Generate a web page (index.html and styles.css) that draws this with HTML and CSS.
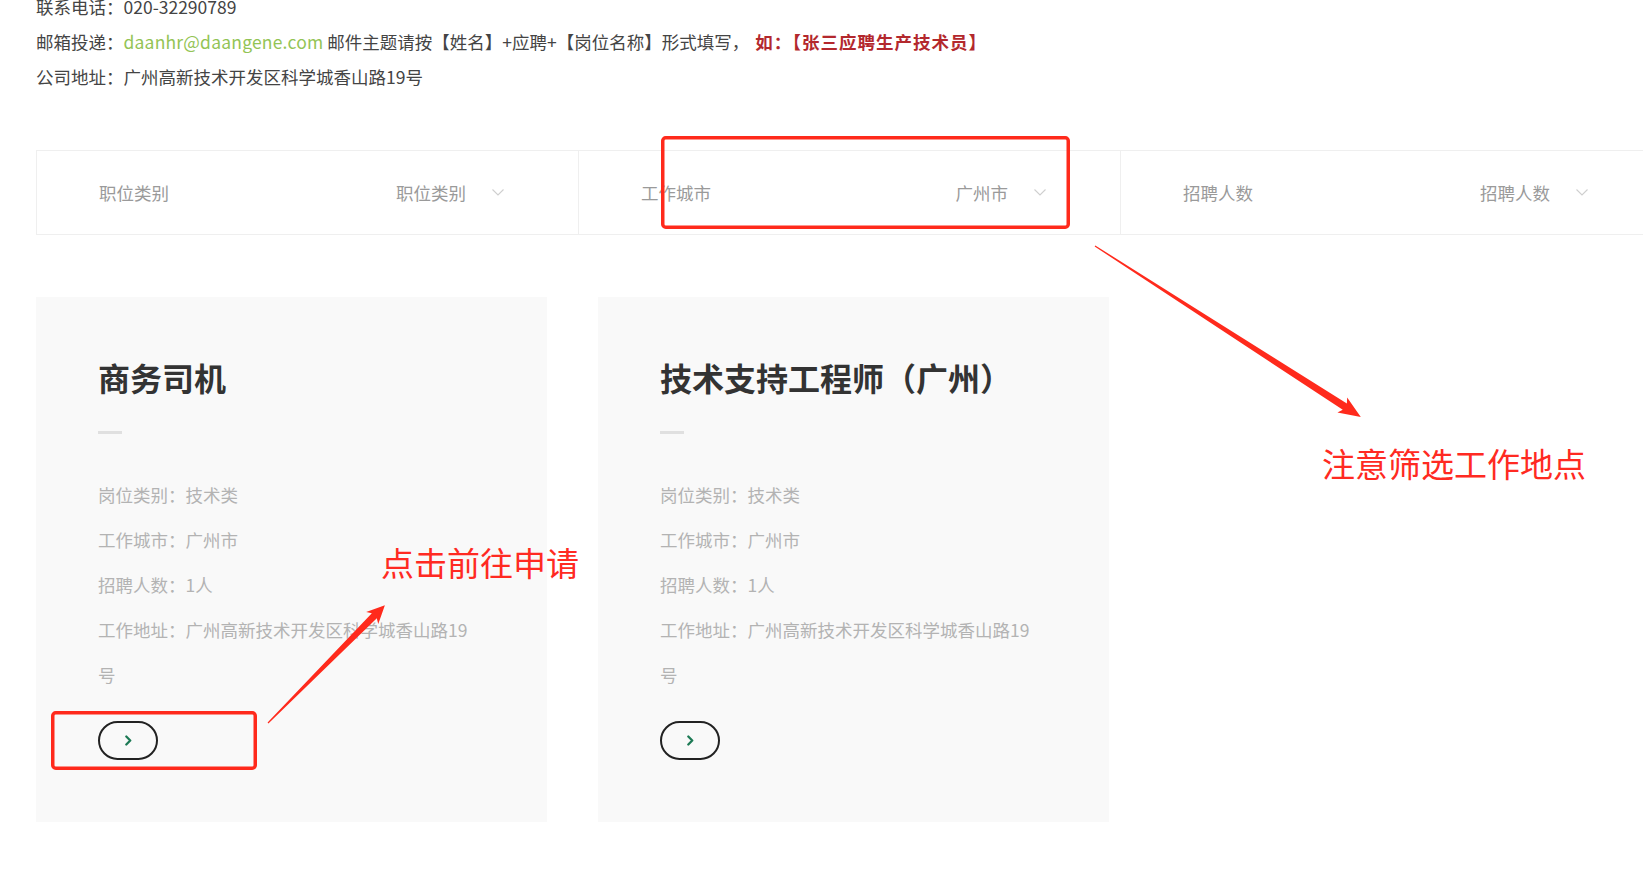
FILE: index.html
```html
<!DOCTYPE html>
<html lang="zh-CN">
<head>
<meta charset="utf-8">
<title>招聘职位</title>
<link rel="stylesheet" href="styles.css">
</head>
<body>
<div class="page">
  <div class="contact">
    <p>联系电话：020-32290789</p>
    <p>邮箱投递：<span class="email">daanhr@daangene.com</span> 邮件主题请按【姓名】+应聘+【岗位名称】形式填写，<strong class="hint">如：【张三应聘生产技术员】</strong></p>
    <p>公司地址：广州高新技术开发区科学城香山路19号</p>
  </div>

  <div class="filters">
    <div class="filter">
      <span class="label">职位类别</span>
      <span class="select">职位类别<svg class="chev" viewBox="0 0 12 7" width="12" height="7"><polyline points="0.5,0.5 6,6 11.5,0.5"/></svg></span>
    </div>
    <div class="filter">
      <span class="label">工作城市</span>
      <span class="select">广州市<svg class="chev" viewBox="0 0 12 7" width="12" height="7"><polyline points="0.5,0.5 6,6 11.5,0.5"/></svg></span>
    </div>
    <div class="filter">
      <span class="label">招聘人数</span>
      <span class="select">招聘人数<svg class="chev" viewBox="0 0 12 7" width="12" height="7"><polyline points="0.5,0.5 6,6 11.5,0.5"/></svg></span>
    </div>
  </div>

  <div class="jobs">
    <div class="job">
      <h3 class="job-title">商务司机</h3>
      <div class="job-bar"></div>
      <ul class="job-info">
        <li>岗位类别：技术类</li>
        <li>工作城市：广州市</li>
        <li>招聘人数：1人</li>
        <li>工作地址：广州高新技术开发区科学城香山路19号</li>
      </ul>
      <a class="job-go" href="#"><svg viewBox="0 0 8 12" width="7" height="11"><polyline points="1.5,1.5 6,6 1.5,10.5"/></svg></a>
    </div>
    <div class="job">
      <h3 class="job-title">技术支持工程师（广州）</h3>
      <div class="job-bar"></div>
      <ul class="job-info">
        <li>岗位类别：技术类</li>
        <li>工作城市：广州市</li>
        <li>招聘人数：1人</li>
        <li>工作地址：广州高新技术开发区科学城香山路19号</li>
      </ul>
      <a class="job-go" href="#"><svg viewBox="0 0 8 12" width="7" height="11"><polyline points="1.5,1.5 6,6 1.5,10.5"/></svg></a>
    </div>
  </div>
</div>

<div class="annotations">
  <svg class="marks" width="1643" height="878" viewBox="0 0 1643 878">
    <rect class="mark-rect" x="662.75" y="137.75" width="405.5" height="89.5" rx="3"/>
    <rect class="mark-rect" x="52.75" y="712.75" width="202.5" height="55.5" rx="3"/>
    <g transform="translate(1095,246) rotate(32.74)">
      <polygon class="mark-arrow" points="0,-0.6 297,-3.8 294,-9 316,0 294,9 297,3.8 0,0.6"/>
    </g>
    <g transform="translate(268,723) rotate(-45.24)">
      <polygon class="mark-arrow" points="0,-0.6 151,-3.5 148,-8.5 166,0 148,8.5 151,3.5 0,0.6"/>
    </g>
  </svg>
  <div class="note note-city">注意筛选工作地点</div>
  <div class="note note-apply">点击前往申请</div>
</div>
</body>
</html>
```

FILE: styles.css
```css
html, body {
  margin: 0;
  padding: 0;
  background: #ffffff;
}

body {
  font-family: "Noto Sans CJK SC", "Noto Sans", sans-serif;
  overflow: hidden;
  position: relative;
  width: 1643px;
  height: 878px;
}

.page {
  width: 1700px;
  padding-left: 36px;
}

.contact {
  margin-top: -11px;
  font-size: 17.5px;
  line-height: 35px;
  color: #444444;
}

.contact p {
  margin: 0;
}

.email {
  color: #93c455;
  letter-spacing: 0.2px;
}

.hint {
  color: #b3282d;
  font-weight: 700;
  letter-spacing: 1px;
  margin-left: 6px;
}

.filters {
  margin-top: 55.5px;
  display: grid;
  grid-template-columns: repeat(3, 542px);
  height: 85px;
  box-sizing: border-box;
  border-top: 1px solid #efefef;
  border-bottom: 1px solid #efefef;
}

.filter {
  display: flex;
  align-items: center;
  justify-content: space-between;
  padding: 0 74px 0 62px;
  border-left: 1px solid #efefef;
  font-size: 17.5px;
  color: #9a9a9a;
}

.select {
  display: flex;
  align-items: center;
  gap: 26px;
}

.chev {
  fill: none;
  stroke: #cfcfcf;
  stroke-width: 1.1;
}

.jobs {
  margin-top: 62px;
  display: flex;
  gap: 51px;
}

.job {
  width: 511px;
  box-sizing: border-box;
  background: #f9f9f9;
  padding: 60px 62px 62px;
}

.job-title {
  margin: 0;
  font-size: 32px;
  line-height: 40px;
  font-weight: 700;
  color: #333333;
  white-space: nowrap;
}

.job-bar {
  width: 24px;
  height: 3px;
  background: #e0e0e0;
  margin-top: 34px;
}

.job-info {
  margin: 38.5px 0 0;
  padding: 0;
  list-style: none;
  font-size: 17.5px;
  line-height: 45px;
  color: #b3b3b3;
  max-width: 374px;
}

.job-go {
  margin-top: 23.5px;
  width: 60px;
  height: 39px;
  box-sizing: border-box;
  border: 2px solid #222222;
  border-radius: 20px;
  display: flex;
  align-items: center;
  justify-content: center;
}

.job-go svg {
  fill: none;
  stroke: #1d7a55;
  stroke-width: 2.6;
  stroke-linecap: round;
  stroke-linejoin: round;
}

.annotations {
  position: absolute;
  left: 0;
  top: 0;
  width: 1643px;
  height: 878px;
  pointer-events: none;
}

.marks {
  position: absolute;
  left: 0;
  top: 0;
}

.mark-rect {
  fill: none;
  stroke: #ff2a1c;
  stroke-width: 3.5;
}

.mark-arrow {
  fill: #ff2a1c;
}

.note {
  position: absolute;
  font-size: 33px;
  line-height: 40px;
  color: #ff2a22;
  white-space: nowrap;
}

.note-city {
  left: 1322px;
  top: 443px;
}

.note-apply {
  left: 381px;
  top: 542px;
}
```
